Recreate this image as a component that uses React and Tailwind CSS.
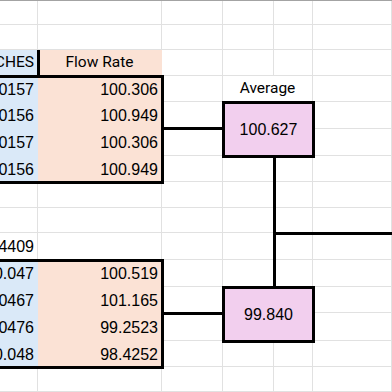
import React from "react";

const COLS = ["col-start-1", "col-start-2", "col-start-3", "col-start-4", "col-start-5", "col-start-6"];
const ROWS = [
  "row-start-1", "row-start-2", "row-start-3", "row-start-4", "row-start-5",
  "row-start-6", "row-start-7", "row-start-8", "row-start-9", "row-start-10",
  "row-start-11", "row-start-12", "row-start-13", "row-start-14", "row-start-15",
];

const BLUE = "bg-[#dae9f8] border-transparent";
const PEACH = "bg-[#fbe2d5] border-transparent";

const NUM = "font-['Liberation_Sans',Arial,sans-serif] text-[16px] leading-none justify-end pr-[3px] pt-[2px]";
const HEAD = "font-[Roboto,sans-serif] text-[15.5px] leading-none";

const data = {
  "2-0": { t: "INCHES", fill: BLUE, cls: HEAD + " justify-end pr-[3px] pt-[1px]" },
  "2-1": { t: "Flow Rate", fill: PEACH, cls: HEAD + " justify-center pt-[1px]" },
  "3-0": { t: "0.0157", fill: BLUE, cls: NUM },
  "3-1": { t: "100.306", fill: PEACH, cls: NUM },
  "4-0": { t: "0.0156", fill: BLUE, cls: NUM },
  "4-1": { t: "100.949", fill: PEACH, cls: NUM },
  "5-0": { t: "0.0157", fill: BLUE, cls: NUM },
  "5-1": { t: "100.306", fill: PEACH, cls: NUM },
  "6-0": { t: "0.0156", fill: BLUE, cls: NUM },
  "6-1": { t: "100.949", fill: PEACH, cls: NUM },
  "9-0": { t: "0.4409", fill: "border-[#e1e1e1]", cls: NUM },
  "10-0": { t: "0.047", fill: BLUE, cls: NUM },
  "10-1": { t: "100.519", fill: PEACH, cls: NUM },
  "11-0": { t: "0.0467", fill: BLUE, cls: NUM },
  "11-1": { t: "101.165", fill: PEACH, cls: NUM },
  "12-0": { t: "0.0476", fill: BLUE, cls: NUM },
  "12-1": { t: "99.2523", fill: PEACH, cls: NUM },
  "13-0": { t: "0.048", fill: BLUE, cls: NUM },
  "13-1": { t: "98.4252", fill: PEACH, cls: NUM },
};

export default function App() {
  const cells = [];
  for (let r = 0; r < 15; r++) {
    for (let c = 0; c < 6; c++) {
      const d = data[`${r}-${c}`];
      cells.push(
        <div
          key={`${r}-${c}`}
          className={`${COLS[c]} ${ROWS[r]} flex items-center overflow-hidden whitespace-nowrap border-r border-b text-black ${
            d ? d.fill + " " + d.cls : "border-[#e1e1e1]"
          }`}
        >
          {d ? d.t : null}
        </div>
      );
    }
  }

  return (
    <div className="relative w-[392px] h-[392px] overflow-hidden bg-white">
      <div className="grid grid-cols-[38px_124px_61px_51px_39px_79px] grid-rows-[24px_25px_26px_26px_27px_27px_26px_26px_25px_27px_27px_26px_28px_26px_25px] border-t border-[#a3a3a3]">
        {cells}

        {/* header divider */}
        <div className="col-start-1 row-start-3 -mr-[2px] border-r-[3px] border-black pointer-events-none" />

        {/* top table border */}
        <div className="col-start-1 col-span-2 row-start-4 row-span-4 -ml-[5px] -mt-[1px] -mr-[2px] -mb-[2px] border-[3px] border-black pointer-events-none" />

        {/* bottom table border */}
        <div className="col-start-1 col-span-2 row-start-11 row-span-4 -ml-[5px] -mt-[1px] -mr-[2px] -mb-[2px] border-[3px] border-black pointer-events-none" />

        {/* Average label (merged) */}
        <div className="col-start-4 col-span-2 row-start-4 flex items-center justify-center pt-[1px] bg-white border-r border-b border-[#e1e1e1] font-[Roboto,sans-serif] text-[15.5px] leading-none text-black">
          Average
        </div>

        {/* Average boxes */}
        <div className="col-start-4 col-span-2 row-start-5 row-span-2 -ml-[1px] -mt-[1px] -mr-[2px] -mb-[2px] flex items-center justify-center bg-[#f2cfee] border-[3px] border-black font-['Liberation_Sans',Arial,sans-serif] text-[16px] leading-none text-black">
          100.627
        </div>
        <div className="col-start-4 col-span-2 row-start-12 row-span-2 -ml-[1px] -mt-[1px] -mr-[2px] -mb-[2px] flex items-center justify-center bg-[#f2cfee] border-[3px] border-black font-['Liberation_Sans',Arial,sans-serif] text-[16px] leading-none text-black">
          99.840
        </div>
      </div>

      {/* connector lines */}
      <svg className="absolute left-0 top-0 pointer-events-none" width="392" height="392" viewBox="0 0 392 392">
        <g fill="#000">
          <rect x="162" y="127" width="62" height="3" />
          <rect x="162" y="312" width="62" height="3" />
          <rect x="273" y="157" width="3" height="131" />
          <rect x="273" y="232" width="119" height="3" />
        </g>
      </svg>
    </div>
  );
}
